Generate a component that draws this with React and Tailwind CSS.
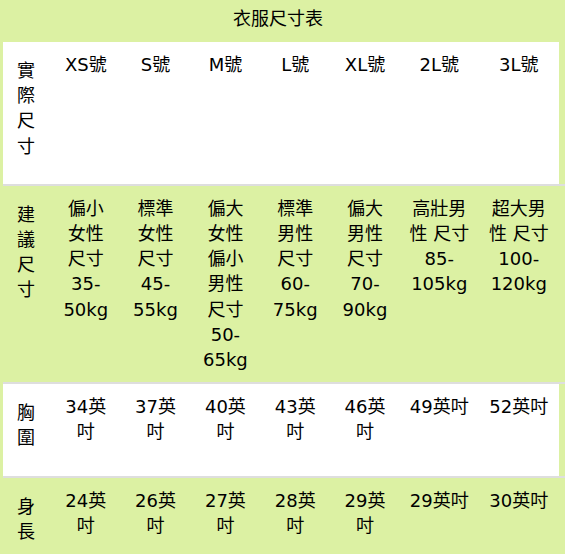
const sizes = ['XS號', 'S號', 'M號', 'L號', 'XL號', '2L號', '3L號'];

const advice = [
    ['偏小', '女性', '尺寸', '35-', '50kg'],
    ['標準', '女性', '尺寸', '45-', '55kg'],
    ['偏大', '女性', '偏小', '男性', '尺寸', '50-', '65kg'],
    ['標準', '男性', '尺寸', '60-', '75kg'],
    ['偏大', '男性', '尺寸', '70-', '90kg'],
    ['高壯男', '性 尺寸', '85-', '105kg'],
    ['超大男', '性 尺寸', '100-', '120kg'],
];

const chest = [
    ['34英', '吋'],
    ['37英', '吋'],
    ['40英', '吋'],
    ['43英', '吋'],
    ['46英', '吋'],
    ['49英吋'],
    ['52英吋'],
];

const length = [
    ['24英', '吋'],
    ['26英', '吋'],
    ['27英', '吋'],
    ['28英', '吋'],
    ['29英', '吋'],
    ['29英吋'],
    ['30英吋'],
];

function Row({ label, cells, white }) {
    return (
        <div
            className={`grid w-[556px] grid-cols-[48px_69.6px_69.8px_70px_69.6px_70px_78.6px_80.4px] ${
                white ? 'bg-white' : ''
            }`}
        >
            <div className="pl-[14px] pt-[16px] pb-[25px]">
                {label.map((ch, i) => (
                    <div key={i}>{ch}</div>
                ))}
            </div>
            {cells.map((lines, i) => (
                <div key={i} className="flex flex-col items-center pt-[10px] pb-[10px]">
                    {lines.map((t, j) => (
                        <div key={j} className="whitespace-pre">{t}</div>
                    ))}
                </div>
            ))}
        </div>
    );
}

export default function App() {
    return (
        <div className="min-h-[554px] bg-[#dcf1a3] text-[18px] leading-[25.2px] text-black font-['DejaVu_Sans','Noto_Sans_CJK_TC',sans-serif]">
            {/* title */}
            <div className="h-[42px] w-[556px] pt-[6px] text-center">衣服尺寸表</div>

            <div className="pl-[3px]">
                <div className="border-b-2 border-[#dedede]">
                    <Row white label={['實', '際', '尺', '寸']} cells={sizes.map((s) => [s])} />
                </div>
                <Row label={['建', '議', '尺', '寸']} cells={advice} />
                <div className="border-y-2 border-[#dedede]">
                    <Row white label={['胸', '圍']} cells={chest} />
                </div>
                <Row label={['身', '長']} cells={length} />
            </div>
        </div>
    );
}
